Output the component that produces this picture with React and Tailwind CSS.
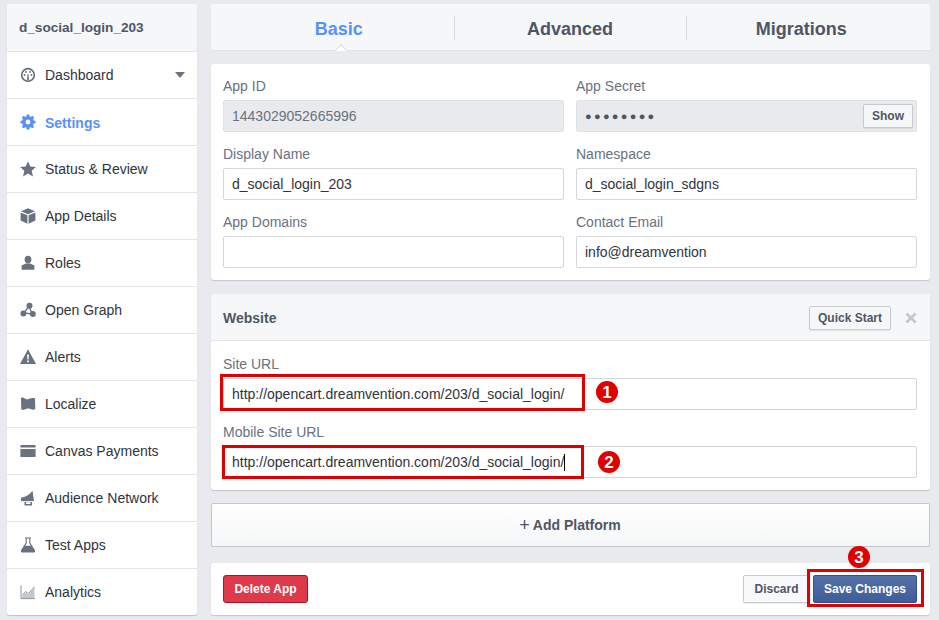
const font = { fontFamily: '"Liberation Sans", Arial, sans-serif' };

const G = "#6a7180";
const icons = {
  dashboard: (c) => (
    <svg width="16" height="16" viewBox="0 0 16 16"><circle cx="8" cy="8" r="6.3" fill="none" stroke={c} strokeWidth="1.7" /><path d="M7 13.200 7.500 7h1L9 13.200Z" fill={c} /><circle cx="4.600" cy="8" r=".9" fill={c} /><circle cx="11.400" cy="8" r=".9" fill={c} /><circle cx="6" cy="5" r=".9" fill={c} /><circle cx="10" cy="5" r=".9" fill={c} /></svg>
  ),
  settings: (c) => (
    <svg width="16" height="16" viewBox="0 0 16 16">
      <circle cx="8" cy="8" r="4.200" fill="none" stroke={c} strokeWidth="3.600" />
      <g fill={c}>
        <circle cx="8" cy="1.800" r="1.500" /><circle cx="8" cy="14.200" r="1.500" /><circle cx="1.800" cy="8" r="1.500" /><circle cx="14.200" cy="8" r="1.500" />
        <circle cx="3.600" cy="3.600" r="1.500" /><circle cx="12.400" cy="3.600" r="1.500" /><circle cx="3.600" cy="12.400" r="1.500" /><circle cx="12.400" cy="12.400" r="1.500" />
      </g>
    </svg>
  ),
  star: (c) => (
    <svg width="16" height="16" viewBox="0 0 16 16"><path fill={c} d="M8 .2l2.300 5.300 5.700.5-4.300 3.700 1.300 5.700L8 12.400l-5 3 1.300-5.700L0 6l5.700-.5Z" /></svg>
  ),
  box: (c) => (
    <svg width="16" height="16" viewBox="0 0 16 16"><path fill={c} d="M8 .2 15 3.200 8 6.200 1 3.200ZM.6 4.400l6.800 2.900v8.500L.6 12.600ZM15.400 4.400v8.200l-6.800 3.200V7.300Z" /></svg>
  ),
  person: (c) => (
    <svg width="16" height="16" viewBox="0 0 16 16"><ellipse cx="8" cy="4.600" rx="3.400" ry="3.800" fill={c} /><path fill={c} d="M5.800 8.600h4.400L14.400 10.400v4.300H1.600v-4.300Z" /></svg>
  ),
  graph: (c) => (
    <svg width="16" height="16" viewBox="0 0 16 16"><path d="M9 4 4 11l8 1Z" fill="none" stroke={c} strokeWidth="1.300" /><circle cx="9.500" cy="3.800" r="3" fill={c} /><circle cx="3.400" cy="11.500" r="3" fill={c} /><circle cx="12.800" cy="12" r="3" fill={c} /></svg>
  ),
  alert: (c) => (
    <svg width="16" height="16" viewBox="0 0 16 16"><path fillRule="evenodd" fill={c} d="M8 .3 16 15H0ZM7.100 5.500l.3 5h1.200l.3-5ZM7.100 11.500v1.800h1.800v-1.800Z" /></svg>
  ),
  map: (c) => (
    <svg width="16" height="16" viewBox="0 0 16 16"><path fill={c} d="M1 2c1.600-.7 2.500-.5 3.500.3s2.300 1.300 3.500 1c1.600-.4 3-1.200 4-1.200s2 .2 3 .2l.3 10.800c-1.500.7-2.800.7-4 .2s-3-1-4.500-.5-3 1.200-5.500 1Z" /></svg>
  ),
  card: (c) => (
    <svg width="16" height="16" viewBox="0 0 16 16"><path fillRule="evenodd" fill={c} d="M1 2h14a.6.6 0 0 1 .6.6v10.800a.6.6 0 0 1-.6.6H1a.6.6 0 0 1-.6-.6V2.600A.6.6 0 0 1 1 2ZM.4 4.500V6h15.200V4.500Z" /></svg>
  ),
  megaphone: (c) => (
    <svg width="16" height="16" viewBox="0 0 16 16"><path fillRule="evenodd" fill={c} d="M12.500.8 14 11 1.600 11.300C.6 10.500.6 8.500 1.600 7.600 6 6.800 10 4.500 12.500.8ZM4.500 12h7.500v3.400H4.500ZM6 12.300v1.800h4.500v-1.800Z" /></svg>
  ),
  flask: (c) => (
    <svg width="16" height="16" viewBox="0 0 16 16"><path d="M5 1h6M6.200 1v5L1.800 13.200M9.800 1v5l4.400 7.200" fill="none" stroke={c} strokeWidth="1.100" /><path fill={c} d="M4.300 8.800h7.400l3.300 4.700c.4 1-.2 2-1.200 2H2.200c-1 0-1.600-1-1.200-2Z" /></svg>
  ),
  chart: (c) => (
    <svg width="16" height="16" viewBox="0 0 16 16"><path d="M1 1.500V14.600H15" fill="none" stroke="#8d949e" strokeWidth="1" /><path fill="#c4c7cd" d="M2 12.500 5.500 8.500l3 2.200L14.500 3.500v10.600H2Z" /><path d="M2 11.500 5.500 7.500l3 2.200 6-7" fill="none" stroke="#8d949e" strokeWidth="1" /></svg>
  ),
};

const nav = [
  ["Dashboard", "dashboard"],
  ["Settings", "settings"],
  ["Status & Review", "star"],
  ["App Details", "box"],
  ["Roles", "person"],
  ["Open Graph", "graph"],
  ["Alerts", "alert"],
  ["Localize", "map"],
  ["Canvas Payments", "card"],
  ["Audience Network", "megaphone"],
  ["Test Apps", "flask"],
  ["Analytics", "chart"],
];

function Sidebar() {
  return (
    <aside className="w-[190px] shrink-0 h-[611px] bg-white rounded-[3px] shadow-[0_1px_1px_rgba(0,0,0,0.18)] overflow-hidden">
      <div className="h-[48px] pl-3 pt-[2px] flex items-center bg-[#f6f7f9] border-b border-[#e4e5e8] text-[13.6px] font-bold text-[#4e5665]">
        d_social_login_203
      </div>
      {nav.map(([name, icon], i) => {
        const active = name === "Settings";
        return (
          <div
            key={name}
            className={`h-[47px] pl-[13px] pr-3 flex items-center text-[14px] border-b ${i < nav.length - 1 ? "border-[#e4e5e8]" : "border-transparent"} ${active ? "font-bold text-[#5890ff]" : "text-[#30343c]"}`}
          >
            <span className="w-[16px] h-[16px] mr-[9px] flex items-center justify-center shrink-0">
              {icons[icon](active ? "#5890ff" : G)}
            </span>
            <span className={`flex-1 ${active ? "pt-[3px]" : "pt-[1px]"}`}>{name}</span>
            {i === 0 && (
              <span className="w-0 h-0 border-x-[5px] border-x-transparent border-t-[6px] border-t-[#6a7180]" />
            )}
          </div>
        );
      })}
    </aside>
  );
}

function Tab({ children, active, first }) {
  return (
    <div className="flex-1 h-[24px] flex items-center justify-center relative">
      {!first && <span className="absolute left-0 top-0 h-[24px] w-px bg-[#d8dade]" />}
      <span className={`text-[18px] font-bold pt-[2px] ${active ? "text-[#5890ff]" : "text-[#4e5665]"}`}>{children}</span>
    </div>
  );
}

function Tabs() {
  return (
    <div className="h-[47px] relative bg-[#f6f7f9] border-b border-[#e2e3e6] rounded-t-[3px] pl-3 pr-[13px] pt-[12px] flex">
      <Tab active first>Basic</Tab>
      <Tab>Advanced</Tab>
      <Tab>Migrations</Tab>
      <span className="absolute left-[123px] bottom-[-1px] w-[14px] h-[8px] overflow-hidden">
        <span className="block w-[10px] h-[10px] ml-[2px] mt-[3px] rotate-45 bg-white border-l border-t border-[#d8dade]" />
      </span>
    </div>
  );
}

function Field({ label, value, disabled, children, top = "mt-[15px]" }) {
  return (
    <div className={top}>
      <div className="h-[14px] leading-[14px] text-[14px] text-[#6a7180] mb-[7px]">{label}</div>
      <div className={`h-[32px] rounded-[2px] border flex items-center pl-[8px] text-[14px] ${disabled ? "bg-[#e9eaed] border-[#e1e2e5] text-[#6a7180]" : "bg-white border-[#d4d6da] text-[#30343c]"}`}>
        {value}
        {children}
      </div>
    </div>
  );
}

function Panel({ className = "", children }) {
  return <section className={`bg-white rounded-[3px] shadow-[0_1px_1px_rgba(0,0,0,0.16)] ${className}`}>{children}</section>;
}

function Basic() {
  return (
    <Panel className="mt-[13px] h-[216px] pl-3 pr-[13px] pt-[15px]">
      <div className="grid grid-cols-2 gap-x-3">
        <Field top="mt-0" label="App ID" value="1443029052665996" disabled />
        <Field top="mt-0" label="App Secret" disabled>
          <span className="text-[#4e5665] text-[11px] tracking-[2.3px] flex-1 leading-none">●●●●●●●●</span>
          <button className="h-[24px] w-[50px] mr-[3px] bg-[#f6f7f9] border border-[#c8cad0] rounded-[2px] text-[12px] font-bold text-[#4e5665] shadow-[0_1px_1px_rgba(0,0,0,0.08)]">Show</button>
        </Field>
        <Field label="Display Name" value="d_social_login_203" />
        <Field label="Namespace" value="d_social_login_sdgns" />
        <Field label="App Domains" value="" />
        <Field label="Contact Email" value="info@dreamvention" />
      </div>
    </Panel>
  );
}

function Website() {
  return (
    <Panel className="mt-[14px] h-[196px] overflow-hidden">
      <div className="h-[47px] bg-[#f6f7f9] border-b border-[#e2e3e6] pl-3 pr-[13px] pt-[2px] flex items-center">
        <span className="flex-1 text-[14px] font-bold text-[#4e5665]">Website</span>
        <button className="h-[24px] w-[82px] bg-[#f6f7f9] border border-[#c8cad0] rounded-[2px] text-[12px] font-bold text-[#4e5665] shadow-[0_1px_1px_rgba(0,0,0,0.08)]">Quick Start</button>
        <svg className="ml-[14px]" width="12" height="12" viewBox="0 0 11 11"><path d="M1.300 1.300 9.700 9.700M9.700 1.300 1.300 9.700" stroke="#c4c7cd" strokeWidth="2.600" /></svg>
      </div>
      <div className="pl-3 pr-[13px]">
        <Field top="mt-[16px]" label="Site URL" value="http://opencart.dreamvention.com/203/d_social_login/" />
        <Field top="mt-[15px]" label="Mobile Site URL">
          http://opencart.dreamvention.com/203/d_social_login/
          <span className="w-px h-[17px] bg-black" />
        </Field>
      </div>
    </Panel>
  );
}

function Actions() {
  return (
    <Panel className="mt-[16px] h-[52px] pl-3 pr-[13px] flex items-center">
      <button className="h-[28px] w-[85px] rounded-[3px] bg-[#df3a4b] border border-[#b5101f] text-white text-[12px] font-bold">Delete App</button>
      <div className="flex-1" />
      <button className="h-[28px] w-[67px] rounded-[2px] bg-[#f8f9fa] border border-[#c8cad0] text-[#4e5665] text-[12px] font-bold shadow-[0_1px_1px_rgba(0,0,0,0.08)]">Discard</button>
      <button className="ml-[3px] h-[28px] w-[104px] rounded-[2px] bg-gradient-to-b from-[#5472a8] to-[#3f5c99] border border-[#34508a] text-white text-[12px] font-bold">Save Changes</button>
    </Panel>
  );
}

function Mark({ className }) {
  return <div className={`absolute border-[3px] border-[#e00000] ${className}`} />;
}

function Badge({ n, className }) {
  return (
    <div className={`absolute w-[22px] h-[22px] rounded-full bg-[#e00000] text-white text-[17px] font-bold flex items-center justify-center leading-none ${className}`}>{n}</div>
  );
}

export default function App() {
  return (
    <div style={font} className="relative w-[939px] h-[620px] overflow-hidden bg-[#e9eaed] pt-[4px] pl-[7px] flex gap-[14px]">
      <Sidebar />
      <main className="w-[719px] shrink-0">
        <Tabs />
        <Basic />
        <Website />
        <div className="mt-[13px] h-[44px] rounded-[2px] border border-[#c4c6cb] bg-gradient-to-b from-white to-[#f5f6f7] flex items-center justify-center text-[14px] font-bold text-[#4e5665]">
          <span className="text-[18px] font-normal mr-[3px] leading-none">+</span>
          <span className="mr-[1px]">Add Platform</span>
        </div>
        <Actions />
      </main>
      <Mark className="left-[220px] top-[374px] w-[365px] h-[37px]" />
      <Mark className="left-[222px] top-[445px] w-[362px] h-[34px]" />
      <Mark className="left-[807px] top-[569px] w-[117px] h-[38px]" />
      <Badge n="1" className="left-[596px] top-[381px]" />
      <Badge n="2" className="left-[598px] top-[451px]" />
      <Badge n="3" className="left-[848px] top-[546px]" />
    </div>
  );
}
